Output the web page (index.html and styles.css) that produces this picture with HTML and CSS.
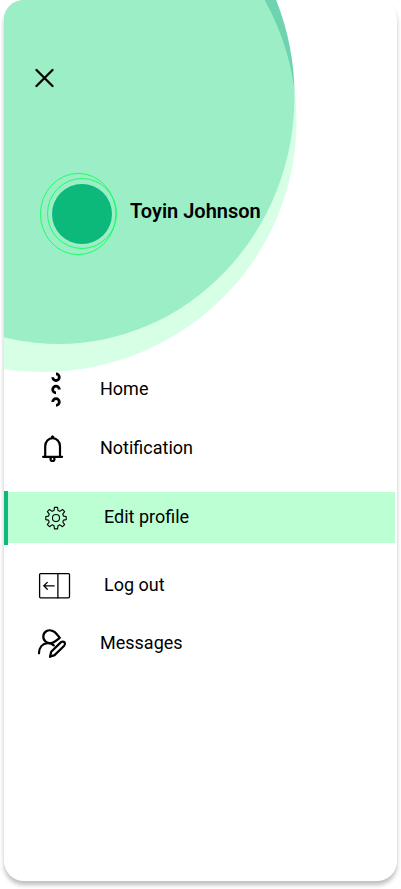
FILE: index.html
```html
<!DOCTYPE html>
<html lang="en">
<head>
<meta charset="utf-8">
<title>Menu</title>
<link rel="stylesheet" href="styles.css">
</head>
<body>
<aside class="drawer">
  <svg class="backdrop" viewBox="0 0 393 881" aria-hidden="true">
    <ellipse class="blob-dark" cx="54.5" cy="96" rx="236" ry="248"/>
    <ellipse class="blob-light" cx="38" cy="121.5" rx="254.5" ry="250.5"/>
  </svg>
  <header class="header">
    <button class="close" aria-label="Close">
      <svg width="20" height="20" viewBox="0 0 20 20"><path d="M1.5 2 17.5 18M17.5 2 1.5 18"/></svg>
    </button>
    <div class="profile">
      <svg class="avatar" width="78" height="84" viewBox="0 0 78 84">
        <ellipse class="ring" cx="38.2" cy="42" rx="37.7" ry="40.6"/>
        <ellipse class="ring" cx="42" cy="41.5" rx="34.5" ry="35"/>
        <circle class="face" cx="42" cy="42" r="30"/>
      </svg>
      <span class="name">Toyin Johnson</span>
    </div>
  </header>
  <nav class="menu">
    <a class="item home">
      <span class="icon"><svg width="40" height="40" viewBox="0 0 40 40">
        <g class="thick">
          <path d="M20 3.9A3.3 3.3 0 1 1 16.7 7.2"/>
          <path d="M23.3 19.5A3.3 3.3 0 1 0 20 22.8"/>
          <path d="M16.7 32A3.3 3.3 0 1 1 20 35.3"/>
        </g>
      </svg></span>
      <span class="label">Home</span>
    </a>
    <a class="item notification">
      <span class="icon"><svg width="40" height="40" viewBox="0 0 40 40">
        <g class="bold"><path d="M9.2 28.5V18.2a7.4 8 0 0 1 14.8 0V28.5M7.1 28.8H26.1"/><circle cx="16.5" cy="31" r="2"/><circle class="knob" cx="16.5" cy="9" r="1.2"/></g>
      </svg></span>
      <span class="label">Notification</span>
    </a>
    <a class="item edit">
      <span class="icon"><svg width="40" height="40" viewBox="0 0 40 40">
        <g class="thin" transform="translate(20 20) scale(.91) translate(-20 -19.9)"><circle cx="20" cy="20" r="3.9"/>
        <path d="M18.3 8.2h3.4l.5 3.5 2.1.9 2.8-2.1 2.4 2.4-2.1 2.8.9 2.1 2.9.5v3.4l-2.9.5-.9 2.1 2.1 2.8-2.4 2.4-2.8-2.1-2.1.9-.5 3.5h-3.4l-.5-3.5-2.1-.9-2.8 2.1-2.4-2.4 2.1-2.8-.9-2.1-2.9-.5v-3.4l2.9-.5.9-2.1-2.1-2.8 2.4-2.4 2.8 2.1 2.1-.9z"/></g>
      </svg></span>
      <span class="label">Edit profile</span>
    </a>
    <a class="item logout">
      <span class="icon"><svg width="40" height="40" viewBox="0 0 40 40">
        <g class="medium"><rect x="3.6" y="8.6" width="29.9" height="24.2" rx="1"/><path d="M21.9 8.6V32.8M18.2 20.8H7.8M11.3 17.4 7.8 20.8 11.3 24.2"/></g>
      </svg></span>
      <span class="label">Log out</span>
    </a>
    <a class="item messages">
      <span class="icon"><svg width="40" height="40" viewBox="0 0 40 40">
        <g class="bold"><path d="M14.8 20A6.4 6.4 0 1 1 16.4 7.9C19.2 8.6 21.3 11.7 23.8 14.8C21 16.7 18.4 20.1 14.8 20Z"/>
        <path d="M3 30.3C3.1 24.5 6.4 20.6 11.6 20.2C14 20 16 20.8 17.8 22.4"/>
        <path d="M14 33.8 15.2 28.7 25 19.1Q27 17.8 28.6 19.4Q29.6 21.2 28.2 22.7L18.6 32.1Z"/></g>
      </svg></span>
      <span class="label">Messages</span>
    </a>
  </nav>
</aside>
</body>
</html>
```
FILE: styles.css
```css
* { box-sizing: border-box; }

body {
  margin: 0;
  height: 889px;
  overflow: hidden;
  background: #fff;
  color: #000;
  font-family: Roboto, sans-serif;
}

.drawer {
  position: relative;
  width: 393px;
  height: 881px;
  margin-left: 4px;
  border-radius: 20px;
  background: #fff;
  box-shadow: 0 4px 4px rgba(0, 0, 0, .25);
  overflow: hidden;
}

.backdrop { position: absolute; inset: 0; width: 393px; height: 881px; }
.blob-dark { fill: rgba(12, 184, 122, .6); }
.blob-light { fill: rgba(187, 255, 211, .6); }

.header { position: relative; height: 369px; padding: 68px 0 0 31px; }

.close { display: block; width: 20px; height: 20px; padding: 0; border: 0; background: none; }
.close svg { display: block; fill: none; stroke: #000; stroke-width: 2.3; stroke-linecap: round; }

.profile { display: flex; align-items: center; margin: 84px 0 0 5px; }
.avatar { flex: none; }
.ring { fill: none; stroke: #1aff66; stroke-width: 1; }
.face { fill: #0cb87a; }
.name { margin: -6px 0 0 12px; font-size: 20px; line-height: 24px; font-weight: 600; white-space: nowrap; }

.menu { position: relative; }
.item { display: flex; align-items: center; height: 40px; padding-left: 32px; font-size: 18px; }
.icon { width: 40px; height: 40px; }
.icon svg { display: block; fill: none; stroke: #000; stroke-linecap: round; stroke-linejoin: round; }
.label { margin-left: 24px; line-height: 22px; }

.home .icon svg { margin-top: 1px; }
.notification { margin-top: 19px; }
.edit { height: 54px; margin-top: 23px; padding-left: 28px; border-left: 4px solid #0cb87a; background: linear-gradient(#bbffd3, #bbffd3) 0 1px / 387px 51px no-repeat; }
.edit .label { margin-left: 28px; margin-top: -3px; }
.logout { margin-top: 20px; }
.logout .label { margin-left: 28px; }
.messages { margin-top: 18px; }

.thick { stroke-width: 2.8; stroke-linecap: butt; }
.bold { stroke-width: 2.2; }
.knob { fill: #000; stroke-width: 1; }
.medium { stroke-width: 1.3; }
.thin { stroke-width: 1.2; }
```
